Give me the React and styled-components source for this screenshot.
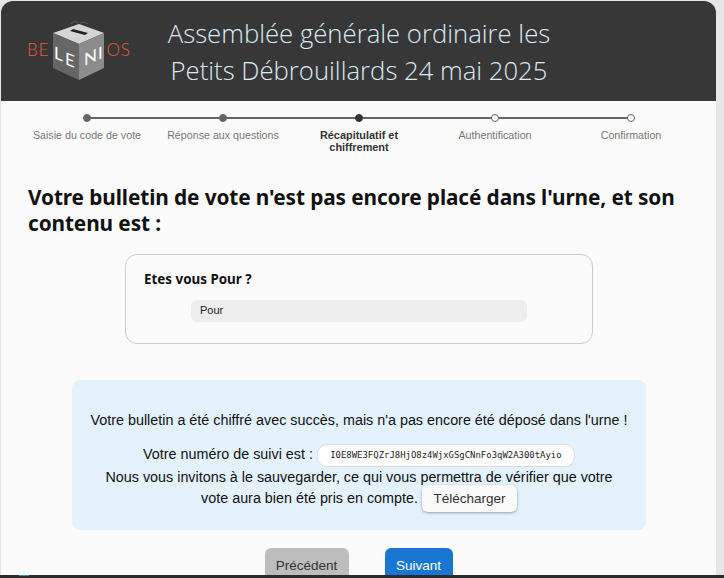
import React from "react";
import styled, { createGlobalStyle } from "styled-components";

const Global = createGlobalStyle`
  html, body { margin: 0; padding: 0; height: 578px; overflow: hidden; background: #e6e6e6; }
  #root { height: 578px; }
  * { box-sizing: border-box; }
`;

const Screen = styled.div`
  height: 578px;
  display: flex;
  flex-direction: column;
  background: #e6e6e6;
`;
const Frame = styled.div`
  flex: 1;
  min-height: 0;
  margin: 1px 8px 0 1px;
  border-radius: 12px 12px 0 0;
  overflow: hidden;
  background: #fbfbfb;
  display: flex;
  flex-direction: column;
  font-family: "Liberation Sans", Arial, sans-serif;
`;
const Header = styled.header`
  height: 100px;
  flex: none;
  background: #373737;
  display: flex;
  align-items: center;
  padding-left: 26px;
`;
const Logo = styled.svg`
  width: 106px;
  height: 62px;
  flex: none;
  margin-top: -2px;
`;
const Title = styled.h1`
  margin: 2px 0 0 33px;
  width: 386px;
  text-align: center;
  font-family: "Open Sans", sans-serif;
  font-weight: 300;
  font-size: 25.7px;
  line-height: 37px;
  color: #dceaf6;
`;
const Steps = styled.ol`
  list-style: none;
  margin: 0;
  padding: 13px 0 0 18px;
  display: grid;
  grid-template-columns: repeat(5, 136px);
  flex: none;
`;
const Step = styled.li`
  position: relative;
  display: flex;
  flex-direction: column;
  align-items: center;
  text-align: center;
  &:not(:last-child)::after {
    content: "";
    position: absolute;
    top: 3px;
    left: 50%;
    width: 136px;
    height: 2px;
    background: #666;
  }
`;
const Dot = styled.span`
  position: relative;
  z-index: 1;
  width: 8px;
  height: 8px;
  border-radius: 50%;
  background: ${(p) => (p.$state === "todo" ? "#fbfbfb" : p.$state === "active" ? "#333" : "#666")};
  border: 1px solid ${(p) => (p.$state === "active" ? "#333" : "#666")};
`;
const StepLabel = styled.span`
  margin-top: 7px;
  width: 128px;
  padding: 0 ${(p) => (p.$active ? 8 : 0)}px;
  font-size: ${(p) => (p.$active ? 10.9 : 10.7)}px;
  line-height: 12px;
  font-weight: ${(p) => (p.$active ? 700 : 400)};
  color: ${(p) => (p.$active ? "#333" : "#777")};
`;
const Main = styled.main`
  flex: 1;
  min-height: 0;
  padding: 0 27px;
`;
const Heading = styled.h2`
  margin: 31px 0 0;
  font-family: "Noto Sans", sans-serif;
  font-weight: 700;
  font-size: 20.8px;
  line-height: 26px;
  color: #111;
  letter-spacing: -0.1px;
`;
const Card = styled.section`
  width: 468px;
  height: 90px;
  margin: 18px 0 0 97px;
  padding: 15px 18px;
  border: 1px solid #ccc;
  border-radius: 12px;
`;
const Question = styled.h3`
  margin: 0;
  font-family: "Noto Sans", sans-serif;
  font-weight: 700;
  font-size: 13.4px;
  line-height: 19px;
  color: #111;
`;
const Answer = styled.div`
  margin: 11px 0 0 47px;
  width: 336px;
  height: 22px;
  padding-left: 9px;
  border-radius: 6px;
  background: #eee;
  font-size: 11px;
  line-height: 21px;
  color: #222;
`;
const Info = styled.section`
  width: 574px;
  height: 150px;
  margin: 36px 0 0 44px;
  padding: 29px 16px 0;
  border-radius: 8px;
  background: #e3f2fd;
  text-align: center;
  font-size: 14.35px;
  line-height: 23px;
  color: #111;
`;
const InfoLine = styled.p`
  margin: 0;
  height: ${(p) => p.$height || 23}px;
`;
const TrackLine = styled.p`
  margin: 11px 0 0;
  height: 23px;
`;
const Code = styled.span`
  display: inline-block;
  width: 258px;
  height: 23px;
  border: 1px solid #ddd;
  border-radius: 10px;
  background: #fff;
  font-family: "DejaVu Sans Mono", "Liberation Mono", monospace;
  font-size: 8.95px;
  line-height: 21px;
  vertical-align: middle;
  color: #222;
`;
const Download = styled.button`
  width: 95px;
  height: 27px;
  margin: -2px 0 0;
  border: 0;
  border-radius: 6px;
  background: #fafafa;
  box-shadow: 0 1px 3px rgba(0, 0, 0, 0.35);
  font: 13.5px "Liberation Sans", Arial, sans-serif;
  color: #333;
  vertical-align: middle;
`;
const Actions = styled.div`
  margin-top: 18px;
  display: flex;
  justify-content: center;
  gap: 36px;
`;
const NavButton = styled.button`
  width: ${(p) => p.$width}px;
  height: 36px;
  border: 0;
  border-radius: 6px;
  background: ${(p) => (p.$primary ? "#1976d2" : "#bdbdbd")};
  color: ${(p) => (p.$primary ? "#fff" : "#333")};
  font: 13.5px "Liberation Sans", Arial, sans-serif;
  padding: 0 0 2px;
`;
const BottomBar = styled.div`
  height: 3px;
  flex: none;
  background: #2b2b2b;
  padding-left: 19px;
`;
const BarTab = styled.span`
  display: block;
  width: 10px;
  height: 1px;
  background: #3b8fc4;
`;

const steps = [
  ["Saisie du code de vote", "done"],
  ["Réponse aux questions", "done"],
  ["Récapitulatif et chiffrement", "active"],
  ["Authentification", "todo"],
  ["Confirmation", "todo"],
];

const BeleniosLogo = () => (
  <Logo viewBox="27 19 106 62" aria-label="Belenios">
    <path d="M71 24l4-3 4 2M80 23l5-1 3 2" stroke="#c9695a" strokeWidth="0.6" fill="none" opacity="0.7" />
    <polygon points="53,33 79,24 104,33 79,44" fill="#d4d4d4" />
    <polygon points="53,33 79,44 79,80 53,68" fill="#666" />
    <polygon points="104,33 79,44 79,80 104,68" fill="#8c8c8c" />
    <polygon points="70,31 73,29 88,33 85,35" fill="#222" />
    <g fill="#f0583a" fontFamily="Lato, sans-serif" fontWeight="300" fontSize="17">
      <text x="27" y="56" letterSpacing="0.8">BE</text>
      <text x="106.5" y="56" letterSpacing="0.8">OS</text>
    </g>
    <g fill="#fff" fontFamily="Lato, sans-serif" fontWeight="400" fontSize="17">
      <text transform="translate(54 58) skewY(22)">L</text>
      <text transform="translate(65 64) skewY(22)">E</text>
      <text transform="translate(84 66) skewY(-24)">N</text>
      <text transform="translate(98 60) skewY(-24)">I</text>
    </g>
  </Logo>
);

export default function App() {
  return (
    <Screen>
      <Global />
      <Frame>
        <Header>
          <BeleniosLogo />
          <Title>
            Assemblée générale ordinaire les
            <br />
            Petits Débrouillards 24 mai 2025
          </Title>
        </Header>
        <Steps>
          {steps.map(([label, state]) => (
            <Step key={label}>
              <Dot $state={state} />
              <StepLabel $active={state === "active"}>{label}</StepLabel>
            </Step>
          ))}
        </Steps>
        <Main>
          <Heading>Votre bulletin de vote n'est pas encore placé dans l'urne, et son contenu est :</Heading>
          <Card>
            <Question>Etes vous Pour ?</Question>
            <Answer>Pour</Answer>
          </Card>
          <Info>
            <InfoLine>Votre bulletin a été chiffré avec succès, mais n'a pas encore été déposé dans l'urne !</InfoLine>
            <TrackLine>
              Votre numéro de suivi est : <Code>I0E8WE3FQZrJ8HjO8z4WjxGSgCNnFo3qW2A300tAyio</Code>
            </TrackLine>
            <InfoLine $height={21}>Nous vous invitons à le sauvegarder, ce qui vous permettra de vérifier que votre</InfoLine>
            <InfoLine>
              vote aura bien été pris en compte. <Download>Télécharger</Download>
            </InfoLine>
          </Info>
          <Actions>
            <NavButton $width={84}>Précédent</NavButton>
            <NavButton $width={68} $primary>Suivant</NavButton>
          </Actions>
        </Main>
      </Frame>
      <BottomBar>
        <BarTab />
      </BottomBar>
    </Screen>
  );
}
